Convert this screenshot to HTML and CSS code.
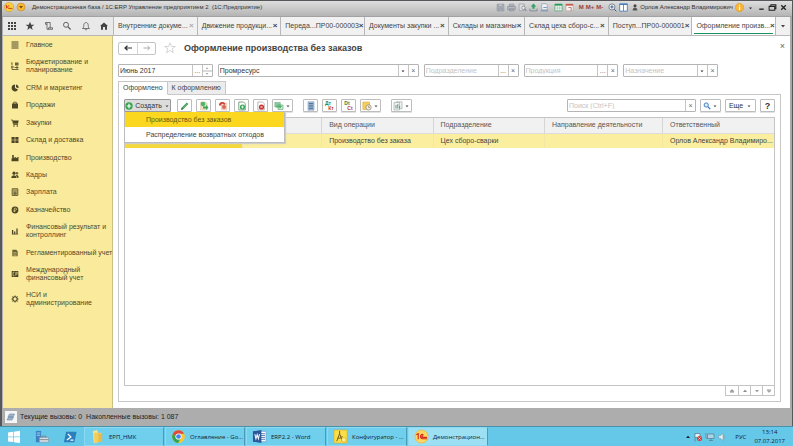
FILE: index.html
```html
<!DOCTYPE html>
<html lang="ru">
<head>
<meta charset="utf-8">
<meta name="viewport" content="width=device-width, initial-scale=1">
<title>Оформление производства без заказов</title>
<link rel="stylesheet" href="styles.css">
</head>
<body>
<div class="window">
  <header class="titlebar">
    <svg class="i10" viewBox="0 0 10 10"><circle cx="5" cy="5" r="4.6" fill="#fbd03c" stroke="#d89b28" stroke-width=".6"/><path d="M1.6 3.8l.9-.5v3.2M5.4 4.1c-1.7-1.3-2.6 2-.8 2.3h3.7" fill="none" stroke="#d52b1e" stroke-width=".9"/></svg>
    <svg class="i10" viewBox="0 0 10 10"><circle cx="5" cy="5" r="4" fill="#fbb62d" stroke="#b58b3c" stroke-width=".6"/><path d="M3 4h4L5 6.4z" fill="#704a10"/></svg>
    <span class="app-title">Демонстрационная база / 1С:ERP Управление предприятием 2&nbsp; (1С:Предприятие)</span>
    <div class="sys">
      <svg viewBox="0 0 8 8"><path d="M1 1h6v6H1zM2.5 1v2h3V1M2.5 7V4.500h3V7" fill="#a9b0ba" stroke="#8d96a3" stroke-width=".6"/></svg>
      <svg viewBox="0 0 8 8"><path d="M2 1h4v2H2zM.6 3h6.800v3H.6zM2 5h4v2H2z" fill="#b7bcc4" stroke="#8d949d" stroke-width=".7"/></svg>
      <svg viewBox="0 0 8 8"><path d="M1 .8h4.500v6H1z" fill="#ddd" stroke="#8f969f" stroke-width=".6"/><circle cx="4.800" cy="4.300" r="1.500" fill="#eee" stroke="#7d8792" stroke-width=".7"/><path d="M6 5.500l1.500 1.500" stroke="#7d8792"/></svg>
      <svg viewBox="0 0 8 8"><path d="M4 .5l2.500 2.500H5v2H3V3H1.500z" fill="#37a065"/><path d="M.8 5v2h6.400V5" fill="none" stroke="#7c8793" stroke-width=".8"/></svg>
      <svg viewBox="0 0 8 8"><path d="M1.500.6h4l1 1.400v4h-5z" fill="#eef1f5" stroke="#8b98a8" stroke-width=".6"/><path d="M.6 7h6.800M3 4h3" stroke="#6b8bb0" stroke-width=".8"/></svg>
      <svg class="gap" viewBox="0 0 8 8"><path d="M.8 1h6.400v6H.8z" fill="#f4f7f4" stroke="#37a065" stroke-width=".6"/><path d="M.8 1.600h6.400" stroke="#259957" stroke-width="1.500"/><path d="M3 2v5M5 2v5M1 4.500h6" stroke="#8bbd9e" stroke-width=".5"/></svg>
      <svg viewBox="0 0 8 8"><path d="M.8 1h6.400v6H.8z" fill="#f7f1ef" stroke="#b9a39c" stroke-width=".6"/><path d="M.8 1.600h6.400" stroke="#c75b49" stroke-width="1.500"/><path d="M3 4h2.500v3" fill="none" stroke="#9b6f66" stroke-width=".7"/></svg>
      <b class="gap">M</b><b>M+</b><b>M-</b>
      <svg class="gap" viewBox="0 0 8 8"><circle cx="3.500" cy="3.500" r="2.700" fill="#f5f7fa" stroke="#5a6c80" stroke-width=".7"/><path d="M2 3.500h3M3.500 2v3M5.500 5.500l2 2" stroke="#31567d" stroke-width=".8"/></svg>
      <svg viewBox="0 0 8 8"><path d="M.6.8h6.800v6.400H.6zM4 1v6" fill="#fff" stroke="#3977b5" stroke-width=".7"/><path d="M.6 1.200h6.800" stroke="#3977b5"/></svg>
      <svg class="user-icon" viewBox="0 0 6 8"><circle cx="3" cy="2.300" r="1.500" fill="#444"/><path d="M.6 7c0-4 4.800-4 4.800 0z" fill="#555"/></svg>
      <span class="user">Орлов Александр Владимирович</span>
      <svg viewBox="0 0 8 8"><circle cx="4" cy="4" r="3.700" fill="#f8b63a" stroke="#cf8d1d" stroke-width=".4"/><path d="M4 1.500v1M4 3.300v3" stroke="#fff" stroke-width="1"/></svg>
      <svg viewBox="0 0 8 8"><path d="M2.500 4h3L4 5.600z" fill="#333"/></svg>
      <svg viewBox="0 0 8 8"><path d="M2 5.500h4" stroke="#222" stroke-width="1.200"/></svg>
      <svg viewBox="0 0 8 8"><path d="M1 3h5v3.500H1zM2.500 3V1.500H7V5H6" fill="none" stroke="#222" stroke-width=".9"/></svg>
      <svg viewBox="0 0 8 8"><path d="M2 2l4 4M6 2L2 6" stroke="#222" stroke-width="1.200"/></svg>
    </div>
  </header>

  <nav class="tabbar" aria-label="Открытые окна">
    <div class="tools">
      <button aria-label="Меню функций"><svg viewBox="0 0 10 10"><path d="M1 2h2M4 2h2M7 2h2M1 5h2M4 5h2M7 5h2M1 8h2M4 8h2M7 8h2" stroke="#444" stroke-width="2"/></svg></button>
      <button aria-label="Избранное"><svg viewBox="0 0 10 10"><path d="M5 .8l1.200 3h3.100L6.800 5.700l.9 3.200L5 7.100 2.300 8.900l.9-3.200L.7 3.800h3.100z" fill="#444"/></svg></button>
      <button aria-label="История"><svg viewBox="0 0 10 10"><path d="M1.500 1.500h4.700v5.800M3 2v6.300h5.500V6.800H4.500V8M1.500 1.500v1.800H3" fill="none" stroke="#555" stroke-width=".8"/></svg></button>
      <button aria-label="Поиск"><svg viewBox="0 0 10 10"><circle cx="4" cy="3.800" r="2.500" fill="none" stroke="#555" stroke-width=".9"/><path d="M5.800 5.600l2.800 2.900" stroke="#555" stroke-width="1.200"/></svg></button>
      <button aria-label="Уведомления"><svg viewBox="0 0 10 10"><path d="M1.500 7.500c1.500-1 1-2.500 1.400-4 .5-2.600 3.700-2.600 4.200 0 .4 1.500-.1 3 1.400 4zM4 8.200c.3 1 1.700 1 2 0" fill="none" stroke="#555" stroke-width=".8"/></svg></button>
      <button aria-label="Начальная страница"><svg viewBox="0 0 10 10"><path d="M5 1.500L9 5H8v3.700H6V6H4v2.700H2V5H1z" fill="#444"/></svg></button>
    </div>
    <div class="tabs">
      <div class="tab"><a href="#">Внутренние докуме...</a><button class="soft" aria-label="Закрыть">×</button></div>
      <div class="tab"><a href="#">Движение продукци...</a><button aria-label="Закрыть">×</button></div>
      <div class="tab"><a href="#">Переда...ПР00-000003</a><button aria-label="Закрыть">×</button></div>
      <div class="tab"><a href="#">Документы закупки ...</a><button aria-label="Закрыть">×</button></div>
      <div class="tab narrow"><a href="#">Склады и магазины</a><button aria-label="Закрыть">×</button></div>
      <div class="tab"><a href="#">Склад цеха сборо-с...</a><button aria-label="Закрыть">×</button></div>
      <div class="tab"><a href="#">Поступ...ПР00-000001</a><button aria-label="Закрыть">×</button></div>
      <div class="tab active"><a href="#">Оформление произв...</a><button aria-label="Закрыть">×</button></div>
    </div>
    <button class="more-tabs" aria-label="Все окна"><svg class="i6" viewBox="0 0 6 6"><path d="M1 2h4L3 4.500z" fill="#444"/></svg></button>
  </nav>

  <div class="workspace">
    <nav class="sidebar" aria-label="Разделы">
      <ul>
        <li><a href="#"><svg viewBox="0 0 8 8"><path d="M.5 1h7M.5 3h7M.5 5h7M.5 7h7" stroke="#4d4626" stroke-width="1"/></svg>Главное</a></li>
        <li><a href="#"><svg viewBox="0 0 8 8"><path d="M1 .5v3M.3 1.200L1 .5M0 5h3M1 4v3.500h6.500M3.500 5.500h4M6 4v3" fill="none" stroke="#4d4626" stroke-width=".8"/><path d="M4 .5h3.500v3H4z" fill="#6b6236"/></svg><span>Бюджетирование и<br>планирование</span></a></li>
        <li><a href="#"><svg viewBox="0 0 8 8"><path d="M4 4V.6A3.400 3.400 0 1 0 7 5.600z" fill="#4d4626"/><path d="M5 .6a3.300 3.300 0 0 1 2.600 3.600L5 3.300z" fill="#4d4626"/></svg>CRM и маркетинг</a></li>
        <li><a href="#"><svg viewBox="0 0 8 8"><path d="M1 2.500h6v5H1z" fill="#4d4626"/><path d="M2.700 3V1.200h2.600V3" fill="none" stroke="#4d4626" stroke-width=".8"/></svg>Продажи</a></li>
        <li><a href="#"><svg viewBox="0 0 8 8"><path d="M0 1h1.500l1 4.500h4.500" fill="none" stroke="#4d4626" stroke-width=".8"/><path d="M1.700 1.500h6L7 4.800H2.500z" fill="#4d4626"/><circle cx="3" cy="7" r=".8" fill="#4d4626"/><circle cx="6.300" cy="7" r=".8" fill="#4d4626"/></svg>Закупки</a></li>
        <li><a href="#"><svg viewBox="0 0 8 8"><path d="M.5 1h3.200v2.700H.5zM4.300 1h3.200v2.700H4.300zM.5 4.300h3.200V7H.5zM4.300 4.300h3.200V7H4.300z" fill="#4d4626"/></svg>Склад и доставка</a></li>
        <li><a href="#"><svg viewBox="0 0 8 8"><path d="M.5 7.300V4.500h.7V1h1.600v3l2-1.200v1.400l2.700-1.400v4.500z" fill="#4d4626"/></svg>Производство</a></li>
        <li><a href="#"><svg viewBox="0 0 8 8"><circle cx="3" cy="2.200" r="1.600" fill="#4d4626"/><circle cx="6" cy="2.300" r="1.200" fill="#6b6236"/><path d="M.3 7c0-3.800 5.300-3.800 5.300 0zM5 4.200c1.500-.5 2.700.5 2.700 2.600H6.200z" fill="#4d4626"/></svg>Кадры</a></li>
        <li><a href="#"><svg viewBox="0 0 8 8"><path d="M1.200.8h5.600v6.600H1.200z" fill="#f1e08e" stroke="#4d4626" stroke-width=".9"/><path d="M2 2.200h4M2 4h4M2 5.700h4M3.300 3.500v3.500M4.800 3.500v3.500" stroke="#4d4626" stroke-width=".7"/></svg>Зарплата</a></li>
        <li><a href="#"><svg viewBox="0 0 8 8"><circle cx="4" cy="4" r="3.400" fill="#4d4626"/><path d="M3.300 6.200V2.200h1.200c1.500 0 1.500 2 0 2H2.500M2.500 5.200h2" fill="none" stroke="#f5e58e" stroke-width=".6"/></svg>Казначейство</a></li>
        <li><a href="#"><svg viewBox="0 0 8 8"><path d="M.8 7.200h6.400" stroke="#4d4626" stroke-width=".7"/><path d="M1.600 3v4M3.700 4.500V7M6 1.500V7" stroke="#4d4626" stroke-width="1.300"/></svg><span>Финансовый результат и<br>контроллинг</span></a></li>
        <li><a href="#"><svg viewBox="0 0 8 8"><path d="M1.300.8h3.900l1.500 1.500v5H1.300z" fill="#6b6236"/><path d="M2.300 3.500h3.300M2.300 5h3.300M2.300 6.300h3.300" stroke="#f5e58e" stroke-width=".5"/></svg>Регламентированный учет</a></li>
        <li><a href="#"><svg viewBox="0 0 8 8"><path d="M.7 1h6.600v6H.7z" fill="#4d4626"/><path d="M3.500 2.200H2v3.600h1.500M4.800 5.800V2.300h1.500v1.800H4.800" fill="none" stroke="#f5e58e" stroke-width=".6"/></svg><span>Международный<br>финансовый учет</span></a></li>
        <li><a href="#"><svg viewBox="0 0 8 8"><circle cx="4" cy="4" r="2.200" fill="none" stroke="#4d4626" stroke-width="1.100"/><path d="M4 .5v1.300M4 6.200v1.300M.5 4h1.300M6.200 4h1.300M1.500 1.500l1 1M5.500 5.500l1 1M6.500 1.500l-1 1M2.500 5.500l-1 1" stroke="#4d4626" stroke-width="1"/></svg><span>НСИ и<br>администрирование</span></a></li>
      </ul>
    </nav>

    <main class="page">
      <div class="page-head">
        <div class="history">
          <button aria-label="Назад"><svg viewBox="0 0 10 8"><path d="M2 4h7M4.500 1.800L2 4l2.500 2.200" fill="none" stroke="#333" stroke-width="1.200"/></svg></button>
          <button aria-label="Вперед"><svg viewBox="0 0 10 8"><path d="M1.500 4h6M5.500 2l2.300 2-2.300 2" fill="none" stroke="#aaa" stroke-width="1"/></svg></button>
        </div>
        <svg class="star" viewBox="0 0 12 12"><path d="M6 .8l1.500 3.700h3.800L8.200 6.800l1.200 4L6 8.500l-3.400 2.300 1.200-4L.7 4.500h3.800z" fill="#fff" stroke="#bbb" stroke-width=".6"/></svg>
        <h1>Оформление производства без заказов</h1>
        <button class="close" aria-label="Закрыть форму">×</button>
      </div>

      <form class="filters">
        <div class="field"><input aria-label="Период" value="Июнь 2017"><button type="button" aria-label="Выбрать период">...</button><button type="button" aria-label="Изменить период"><svg class="spin" viewBox="0 0 10 12"><path d="M0 6h10" stroke="#b5b5b5"/><path d="M3.800 3.800h2.400L5 2.400zM3.800 8.200h2.400L5 9.600z" fill="#777"/></svg></button></div>
        <div class="field wide"><input aria-label="Организация" value="Промресурс"><button type="button" aria-label="Список организаций"><svg class="i6" viewBox="0 0 6 6"><path d="M1.500 2.500h3L3 4.200z" fill="#333"/></svg></button><button type="button" aria-label="Очистить">×</button></div>
        <div class="field"><input aria-label="Подразделение" placeholder="Подразделение"><button type="button" aria-label="Выбрать">...</button><button type="button" aria-label="Очистить">×</button></div>
        <div class="field"><input aria-label="Продукция" placeholder="Продукция"><button type="button" aria-label="Выбрать">...</button><button type="button" aria-label="Очистить">×</button></div>
        <div class="field"><input aria-label="Назначение" placeholder="Назначение"><button type="button" aria-label="Выбрать"><svg class="i6" viewBox="0 0 6 6"><path d="M1.500 2.500h3L3 4.200z" fill="#333"/></svg></button><button type="button" aria-label="Очистить">×</button></div>
      </form>

      <div class="subtabs"><button class="on">Оформлено</button><button>К оформлению</button></div>

      <section class="panel">
        <div class="toolbar">
          <div class="create">
            <button class="btn pressed"><svg class="i8" viewBox="0 0 8 8"><circle cx="4" cy="4" r="3.700" fill="#35a64e"/><path d="M4 1.800v4.400M1.800 4h4.400" stroke="#fff" stroke-width="1.200"/></svg>Создать<svg class="i6" viewBox="0 0 6 6"><path d="M1.500 2.500h3L3 4.200z" fill="#444"/></svg></button>
            <div class="menu"><button class="hot">Производство без заказов</button><button>Распределение возвратных отходов</button></div>
          </div>
          <button class="btn sq" aria-label="Изменить"><svg class="i10" viewBox="0 0 10 10"><path d="M1.200 8.800l.6-2.200L6.800 1.500l1.600 1.600-5 5z" fill="#3a9a50"/><path d="M1.200 8.800l.5-1.900 1.400 1.400z" fill="#333"/><path d="M3 6.800l4-4" stroke="#a5d6ae" stroke-width=".5"/></svg></button>
          <button class="btn sq" aria-label="Провести"><svg class="i10" viewBox="0 0 10 10"><path d="M1.500 1h5l1.800 1.800V9H1.500z" fill="#f0dfc2" stroke="#d3b78b" stroke-width=".4"/><circle cx="4" cy="3" r="2.300" fill="#4cb86c"/><path d="M4 5.500h3V4L9.500 6.500 7 9V7.500H4z" fill="#39a659"/></svg></button>
          <button class="btn sq" aria-label="Отменить проведение"><svg class="i10" viewBox="0 0 10 10"><path d="M3.500 2h5.300v7H3.500z" fill="#f0dcc8" stroke="#d9ab88" stroke-width=".4"/><path d="M1 3.500C1.500.5 6 .2 7.500 3l-1.300 1C5 2.500 3.500 2.600 3 3.500l1 1H1z" fill="#cf4236"/><circle cx="6" cy="6" r="2" fill="#dc6552"/></svg></button>
          <button class="btn sq" aria-label="Скопировать"><svg class="i10" viewBox="0 0 10 10"><path d="M1.800 1h4.700l1.800 1.800V9H1.800z" fill="#fff" stroke="#4d7f5a" stroke-width=".7"/><circle cx="5.500" cy="6" r="2.600" fill="#35a653"/><path d="M5.500 4.600v2.800M4.100 6h2.800" stroke="#fff" stroke-width=".8"/></svg></button>
          <button class="btn sq" aria-label="Пометить на удаление"><svg class="i10" viewBox="0 0 10 10"><path d="M1.800 1h4.700l1.800 1.800V9H1.800z" fill="#fff" stroke="#9c8a8a" stroke-width=".6"/><circle cx="5.500" cy="6" r="2.600" fill="#cc3232"/><path d="M4.600 5.100l1.800 1.800M6.400 5.100L4.600 6.900" stroke="#fff" stroke-width=".7"/></svg></button>
          <button class="btn dd" aria-label="Создать на основании"><svg class="i10" viewBox="0 0 10 10"><path d="M.8 1.500h5.500v4.500H.8z" fill="#8bcba0" stroke="#63a87a" stroke-width=".5"/><path d="M4 4h5v4.500H4z" fill="#d5eedb" stroke="#519e6b" stroke-width=".6"/><path d="M2.500 4.500h3V3L8 5.500 5.500 8V6.500h-3z" fill="#4cb56b"/></svg><svg class="i6" viewBox="0 0 6 6"><path d="M1.500 2.500h3L3 4.200z" fill="#444"/></svg></button>
          <button class="btn sq split" aria-label="Реестр"><svg class="i10" viewBox="0 0 10 10"><path d="M2 .8h6v8.400H2z" fill="#acc1d8" stroke="#6787ac" stroke-width=".5"/><path d="M3 2.500h4M3 4.200h4M3 5.900h4M3 7.600h4" stroke="#39618f" stroke-width=".8"/></svg></button>
          <button class="btn sq" aria-label="Проводки бухгалтерского учета"><span class="dk"><i>Дт</i><i>Кт</i></span></button>
          <button class="btn sq" aria-label="Проводки регламентированного учета"><span class="dk"><i>Dt</i><i>Ct</i></span></button>
          <button class="btn dd" aria-label="Отложенные действия"><svg class="i10" viewBox="0 0 10 10"><path d="M.8 1h6.700v7.500H.8z" fill="#f6ce57" stroke="#c9a444" stroke-width=".5"/><circle cx="6.600" cy="6.400" r="2.600" fill="#f5efe0" stroke="#8b8068" stroke-width=".7"/><path d="M6.600 4.800v1.700h1.300" fill="none" stroke="#666" stroke-width=".6"/></svg><svg class="i6" viewBox="0 0 6 6"><path d="M1.500 2.500h3L3 4.200z" fill="#444"/></svg></button>
          <button class="btn dd split" aria-label="Отчеты"><svg class="i10" viewBox="0 0 10 10"><path d="M1 1.500h5.500V9H1zM3 .8h6v7H6.500" fill="#eef2f0" stroke="#91a2a0" stroke-width=".6"/><path d="M3 7.500V4M4.800 7.500V3M6.600 7.500V5" stroke="#638b7b" stroke-width=".9"/></svg><svg class="i6" viewBox="0 0 6 6"><path d="M1.500 2.500h3L3 4.200z" fill="#444"/></svg></button>
          <span class="grow"></span>
          <div class="field search"><input type="text" aria-label="Поиск" placeholder="Поиск (Ctrl+F)"><button type="button" aria-label="Очистить поиск">×</button></div>
          <button class="btn dd" aria-label="Найти"><svg class="i8" viewBox="0 0 8 8"><circle cx="3.200" cy="3" r="2.100" fill="#e3f0fb" stroke="#2f76b8" stroke-width=".9"/><path d="M4.800 4.600l2.400 2.600" stroke="#2f76b8" stroke-width="1.200"/></svg><svg class="i6" viewBox="0 0 6 6"><path d="M1.500 2.500h3L3 4.200z" fill="#444"/></svg></button>
          <button class="btn more">Еще<svg class="i6" viewBox="0 0 6 6"><path d="M1.500 2.500h3L3 4.200z" fill="#444"/></svg></button>
          <button class="btn sq help">?</button>
        </div>

        <div class="grid">
          <table>
            <colgroup><col class="c1"><col class="c2"><col class="c3"><col class="c4"><col class="c5"><col class="c6"></colgroup>
            <thead><tr><th class="bare"></th><th></th><th>Вид операции</th><th>Подразделение</th><th>Направление деятельности</th><th>Ответственный</th></tr></thead>
            <tbody><tr><td class="current"></td><td></td><td>Производство без заказа</td><td>Цех сборо-сварки</td><td></td><td>Орлов Александр Владимиро...</td></tr></tbody>
          </table>
        </div>
        <div class="pager">
          <button aria-label="В начало"><svg viewBox="0 0 8 8"><path d="M2 4.500h4L4 2.500zM2 5.500h4" fill="#888" stroke="#888" stroke-width=".5"/></svg></button>
          <button aria-label="Вверх"><svg viewBox="0 0 8 8"><path d="M2 5h4L4 2.800z" fill="#888"/></svg></button>
          <button aria-label="Вниз"><svg viewBox="0 0 8 8"><path d="M2 3h4L4 5.200z" fill="#999"/></svg></button>
          <button aria-label="В конец"><svg viewBox="0 0 8 8"><path d="M2 3.500h4L4 5.500zM2 2.500h4" fill="#999" stroke="#999" stroke-width=".5"/></svg></button>
        </div>
      </section>
    </main>
  </div>

  <div class="status">
    <span class="status-icon"><svg class="i10" viewBox="0 0 10 10"><path d="M3.500 2h5L7 5H2zM2.500 5h5L6 8H1z" fill="#9eb6cc" stroke="#6886a3" stroke-width=".6"/></svg></span>
    <span>Текущие вызовы: 0&nbsp; Накопленные вызовы: 1 087</span>
  </div>
</div>

<footer class="taskbar">
  <button class="pin" aria-label="Пуск"><svg viewBox="0 0 14 14"><path d="M1 2.500L6 1.800v4.800H1zM6.700 1.700L13 .8v5.800H6.700zM1 7.300h5v4.800l-5-.7zM6.700 7.300H13v5.800l-6.300-.9z" fill="#fff"/></svg></button>
  <button class="pin" aria-label="Диспетчер серверов"><svg viewBox="0 0 16 16"><path d="M1 1h6v13H1z" fill="#3b82c4"/><path d="M2 3.500h4M2 6h4" stroke="#b5dcf5" stroke-width="1"/><path d="M5 8.500h10.500v5.500H5z" fill="#d8dde2" stroke="#7f8c97" stroke-width=".6"/><path d="M8 8.500V7h4.500v1.500M5 11h10.500" fill="none" stroke="#6c7a86" stroke-width=".9"/></svg></button>
  <button class="pin" aria-label="PowerShell"><svg viewBox="0 0 16 16"><path d="M3.500 2H15.500l-2.500 12H1z" fill="#2c7ebd"/><path d="M5.500 4.500L9 8l-4.500 3.500M8.500 11.500h3.500" fill="none" stroke="#fff" stroke-width="1.400"/></svg></button>
  <div class="tasks">
    <button class="task"><svg viewBox="0 0 16 16"><path d="M3 2l5-1 1 13-5 1z" fill="#f9e48f"/><path d="M4 4h8.500v9L5 15z" fill="#f3cd5c"/><path d="M9 5h4v8.500H9z" fill="#e5b94a"/></svg><span>ЕРП_НМК</span></button>
    <button class="task"><svg viewBox="0 0 16 16"><circle cx="8" cy="8" r="6.800" fill="#fbc72f"/><path d="M2.100 4.600A6.800 6.800 0 0 1 14 5H8a3 3 0 0 0-2.700 4.200z" fill="#de4a3a"/><path d="M2.100 4.600a6.800 6.800 0 0 0 5.500 10.200l3-5.200A3 3 0 0 1 5.300 9z" fill="#35a452"/><circle cx="8" cy="8" r="3.300" fill="#fff"/><circle cx="8" cy="8" r="2.500" fill="#4484f2"/></svg><span>Оглавление - Go...</span></button>
    <button class="task"><svg viewBox="0 0 16 16"><path d="M7 2.500h8v11H7z" fill="#fff" stroke="#6b8fc4" stroke-width=".6"/><path d="M9.500 5h4.500M9.500 7h4.500M9.500 9h4.500M9.500 11h4.500" stroke="#2b579a" stroke-width=".8"/><path d="M1 2.500L10 1v14l-9-1.500z" fill="#2b579a"/><path d="M3 5.500l1.200 5L5.500 6l1.300 4.500L8 5.500" fill="none" stroke="#fff" stroke-width="1.100"/></svg><span>ERP2.2 - Word</span></button>
    <button class="task"><svg viewBox="0 0 16 16"><rect x="1" y="1" width="14" height="14" rx="1" fill="#f9dd49" stroke="#cfa928" stroke-width=".6"/><path d="M7 2v3M7 5L4 13M7 5l3 8M5 9.500c2 1 4 0 5-2" fill="none" stroke="#6e5a16" stroke-width="1"/><circle cx="11.500" cy="11.500" r="2.300" fill="#fff3a6" stroke="#d9a61e" stroke-width=".7"/></svg><span>Конфигуратор - ...</span></button>
    <button class="task current"><svg viewBox="0 0 16 16"><circle cx="8" cy="8" r="7" fill="#fbd861" stroke="#efad3e" stroke-width=".7"/><path d="M2.500 6.200L4.500 5v6M10 6.300C7 4 5.500 10 9 10.400h5M9.800 7.500c-1.600-.9-2 1.200-.6 1.400h4.500" fill="none" stroke="#d6261c" stroke-width="1.200"/></svg><span>Демонстрацион...</span></button>
  </div>
  <div class="tray">
    <svg class="i6" viewBox="0 0 6 6"><path d="M1 4h4L3 1.800z" fill="#123"/></svg>
    <svg class="i10" viewBox="0 0 10 10"><path d="M2 1v8.500M2 1.500h5v4H2" fill="#e6f2f8" stroke="#607580" stroke-width=".7"/><circle cx="6.500" cy="6.500" r="2.500" fill="#d83a35"/><path d="M5.500 5.500l2 2M7.500 5.500l-2 2" stroke="#fff" stroke-width=".7"/></svg>
    <svg class="i10" viewBox="0 0 10 10"><path d="M2.500 2H9v4.500H2.500zM4 8.500h4M6 6.500v2M1 1v5h1.500" fill="#a9d5e8" stroke="#5c7785" stroke-width=".7"/></svg>
    <svg class="i10" viewBox="0 0 10 10"><path d="M1.500 3.800h1.800L6 1.500v7L3.300 6.200H1.500z" fill="#e8f4fa" stroke="#6c8b9b" stroke-width=".5"/><path d="M7.200 3c1 1 1 3 0 4" fill="none" stroke="#8aa" stroke-width=".7"/></svg>
    <span class="lang">РУС</span>
    <time>13:14<br>07.07.2017</time>
  </div>
</footer>
</body>
</html>
```
FILE: styles.css
```css
* { box-sizing: border-box; }

body {
  margin: 0;
  min-height: 100vh;
  display: flex;
  flex-direction: column;
  background: #fff;
  color: #444;
  font: 7px/8px "Liberation Sans", Arial, sans-serif;
}

button, input { font: inherit; color: inherit; margin: 0; padding: 0; border: 0; background: none; }
button { display: inline-flex; align-items: center; justify-content: center; white-space: nowrap; }
a { color: inherit; text-decoration: none; }
svg { display: block; flex: none; }
.i6 { width: 6px; height: 6px; }
.i8 { width: 8px; height: 8px; }
.i10 { width: 10px; height: 10px; }

.window {
  flex: 1;
  display: flex;
  flex-direction: column;
  border: solid #55575a;
  border-width: 1px 1px 0 2px;
  box-shadow: inset 1px 0 #b0b0b0, inset -2px 0 #a9a9a9;
  padding: 0 2px 0 1px;
}

.titlebar {
  height: 16px;
  display: flex;
  align-items: center;
  gap: 2px;
  padding: 0 4px 3px 2px;
  margin: 0 -2px 0 -1px;
  background: linear-gradient(#dedede, #b4b4b4);
  border-bottom: 1px solid #a2a2a2;
  font-size: 6px;
}
.app-title { margin-left: 4px; color: #333; white-space: nowrap; }
.sys { margin-left: auto; display: flex; align-items: center; gap: 2px; }
.sys svg { width: 9px; height: 9px; }
.sys .user-icon { width: 6px; margin-left: 2px; }
.sys b { color: #a04034; font-size: 6px; }
.sys .gap { margin-left: 3px; }
.user { color: #333; white-space: nowrap; }

.tabbar { height: 19px; display: flex; background: #f1f1f1; border-bottom: 1px solid #b8b8b8; }
.tools { width: 110px; display: flex; align-items: center; justify-content: space-between; padding: 0 4px; background: #e9e9e9; }
.tools svg { width: 10px; height: 10px; }
.tabs { flex: 1; min-width: 0; display: flex; }
.tab { flex: 84 1 0; min-width: 0; display: flex; align-items: center; justify-content: space-between; padding: 0 3px 0 4px; border-left: 1px solid #b8b8b8; white-space: nowrap; }
.tab.narrow { flex-grow: 76; }
.tab button { font-size: 8px; font-weight: bold; color: #444; }
.tab .soft { color: #aaa; }
.tab.active { background: linear-gradient(#1a9560, #1a9560) center bottom 1px / calc(100% - 4px) 1px no-repeat #fff; }
.more-tabs { width: 15px; border-left: 1px solid #b8b8b8; }

.workspace { flex: 1; display: flex; }
.sidebar { width: 110px; flex: none; background: #faeb9c; border-right: 1px solid #cbbf83; }
.sidebar ul { list-style: none; margin: 0; height: 73%; padding: 5px 0 0; display: flex; flex-direction: column; justify-content: space-between; }
.sidebar a { display: flex; align-items: center; gap: 7px; padding: 0 0 0 8px; color: #4f4829; white-space: nowrap; }
.sidebar svg { width: 8px; height: 8px; }

.page { flex: 1; min-width: 0; display: flex; flex-direction: column; padding: 5px 9px 6px 5px; background: #fff; }
.page-head { display: flex; align-items: center; height: 14px; }
.history { display: flex; border: 1px solid #c4c4c4; border-radius: 2px; }
.history button { width: 18px; height: 11px; }
.history button + button { border-left: 1px solid #d5d5d5; }
.history svg { width: 10px; height: 8px; }
.star { width: 12px; height: 12px; margin: 0 8px; }
h1 { margin: 0; font-size: 9px; line-height: 12px; font-weight: bold; color: #444; }
.close { margin-left: auto; margin-right: -4px; margin-top: -4px; font-size: 9px; color: #666; }

.filters { display: flex; gap: 5px; margin-top: 9px; margin-right: 63px; }
.field { flex: 95 1 0; min-width: 0; height: 13px; display: flex; border: 1px solid #b5b5b5; border-radius: 1px; background: #fff; }
.field.wide { flex-grow: 204; }
.field input { flex: 1; min-width: 0; padding: 0 1px; outline: 0; color: #333; }
.field input::placeholder { color: #c4c4c4; opacity: 1; }
.field button { width: 10px; flex: none; border-left: 1px solid #c4c4c4; color: #666; }
.spin { width: 10px; height: 12px; }

.subtabs { display: flex; margin-top: 4px; position: relative; margin-bottom: -1px; }
.subtabs button { height: 14px; padding: 0 4px; border: 1px solid #c8c8c8; border-left: 0; background: #ececec; }
.subtabs .on { border-left: 1px solid #c8c8c8; border-bottom-color: #fff; background: #fff; }

.panel { flex: 1; display: flex; flex-direction: column; border: 1px solid #c8c8c8; padding: 4px 5px; }
.toolbar { display: flex; gap: 4px; margin-bottom: 5px; }
.create { position: relative; margin-right: 2px; }
.btn { height: 13px; border: 1px solid #bdbdbd; border-radius: 1px; background: #fff; box-shadow: 0 1px #e2e2e2; color: #333; }
.pressed { width: 47px; gap: 2px; background: #dcdcdc; border-color: #999; }
.sq { width: 15px; }
.dd { width: 21px; gap: 1px; }
.split { margin-left: 6px; }
.more { width: 31px; gap: 3px; }
.help { font-size: 9px; font-weight: bold; }
.grow { flex: 1; }
.search { flex: 0 1 129px; }
.dk { display: flex; flex-direction: column; font: bold 5px/5px "Liberation Sans", Arial, sans-serif; }
.dk i { font-style: normal; color: #27834a; padding-right: 3px; }
.dk i + i { color: #b53b32; padding: 0 0 0 3px; }

.menu { position: absolute; top: 13px; left: 0; z-index: 2; width: 161px; background: #fff; border: 1px solid #bcbcbc; border-top: 0; box-shadow: 1px 1px 1px #ccc; }
.menu button { display: flex; width: 100%; height: 15px; padding-left: 21px; justify-content: flex-start; }
.menu .hot { background: #fbd720; color: #665a14; }

.grid { flex: 1; border: 1px solid #c4c4c4; }
table { width: 100%; table-layout: fixed; border-collapse: collapse; }
th, td { height: 15px; padding: 0 0 0 7px; text-align: left; font-weight: normal; white-space: nowrap; overflow: hidden; }
th { background: #f1f1f1; border-left: 1px solid #d5d5d5; border-bottom: 1px solid #dcdcdc; color: #555; }
th.bare { border-left: 0; }
td { background: #fbee9f; border-left: 1px solid #f3e7a4; color: #444; }
td.current { background: #f5d93c; border-left: 0; }
.c1 { width: 18%; }
.c2 { width: 12%; }
.c3 { width: 17%; }
.c4 { width: 17%; }
.c5 { width: 18%; }
.c6 { width: 17%; }

.pager { display: flex; align-self: flex-end; border: 1px solid #c4c4c4; border-top: 0; margin-bottom: 1px; }
.pager button { width: 12px; height: 9px; }
.pager button + button { border-left: 1px solid #c4c4c4; }
.pager svg { width: 8px; height: 8px; }

.status { height: 18px; display: flex; align-items: center; gap: 3px; padding-left: 3px; margin: 0 -2px 0 -1px; background: #adadad; color: #222; }
.status-icon { background: #f5f5f5; padding: 1px; }

.taskbar { height: 20px; display: flex; align-items: stretch; background: #66c8e9; border-top: 1px solid #4a90a8; color: #123; font: 6px/8px "Open Sans", "Noto Sans", sans-serif; }
.pin { width: 28px; }
.pin svg { width: 14px; height: 14px; }
.tasks { flex: 1; display: flex; gap: 1px; }
.task { flex: 0 1 80px; min-width: 0; justify-content: flex-start; gap: 4px; padding-left: 5px; background: #70cfec; border: 1px solid #8bdaf1; border-right-color: #459db9; }
.task.current { background: #9de0f3; }
.task svg { width: 15px; height: 15px; }
.tray { display: flex; align-items: center; gap: 2px; padding-right: 8px; }
.lang { margin: 0 6px; }
time { text-align: center; line-height: 9px; }
```
